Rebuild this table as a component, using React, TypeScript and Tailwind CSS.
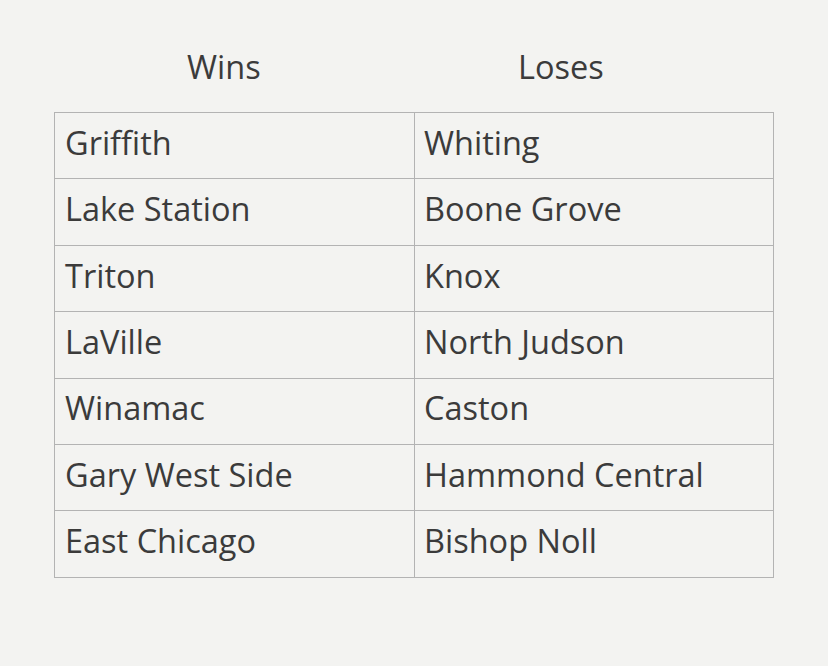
import React from "react";

const rows: [string, string][] = [
  ["Griffith", "Whiting"],
  ["Lake Station", "Boone Grove"],
  ["Triton", "Knox"],
  ["LaVille", "North Judson"],
  ["Winamac", "Caston"],
  ["Gary West Side", "Hammond Central"],
  ["East Chicago", "Bishop Noll"],
];

export default function App() {
  return (
    <div
      className="w-[828px] h-[666px] bg-[#f3f3f1] text-[#3b3b3b] overflow-hidden"
      style={{ fontFamily: '"Open Sans", "Liberation Sans", sans-serif' }}
    >
      <div className="flex h-[112px] pt-[44px] text-[32.5px] leading-[46px]">
        <div className="w-[187px]" />
        <div className="w-[331px]">Wins</div>
        <div>Loses</div>
      </div>
      <div className="ml-[54px] w-[720px] border-t border-l border-[#b3b3b3]">
        {rows.map(([a, b]) => (
          <div key={a} className="flex h-[66.4px] border-b border-[#b3b3b3]">
            <div className="w-[360px] border-r border-[#b3b3b3] pl-[10px] pb-[5px] flex items-center text-[32.5px]">
              {a}
            </div>
            <div className="w-[359px] border-r border-[#b3b3b3] pl-[9px] pb-[5px] flex items-center text-[32.5px]">
              {b}
            </div>
          </div>
        ))}
      </div>
    </div>
  );
}
